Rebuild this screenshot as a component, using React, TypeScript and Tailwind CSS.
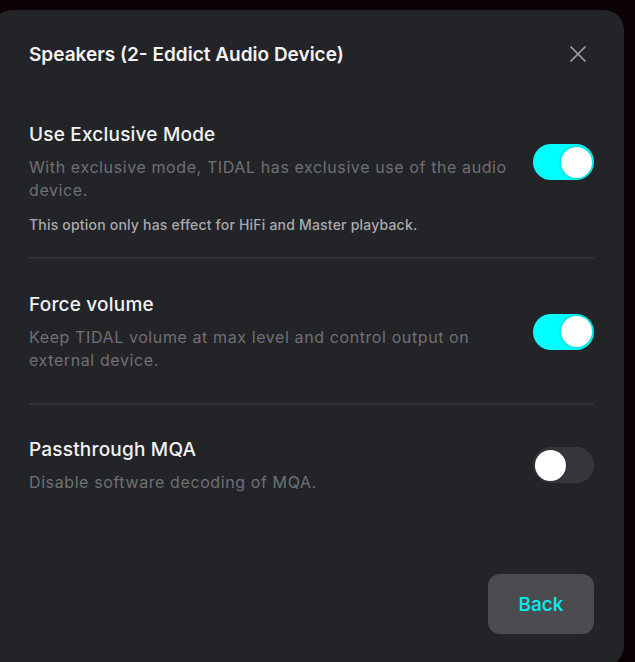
import React, { useState } from "react";

type Option = {
  id: string;
  title: string;
  description: string;
  note?: string;
  enabled: boolean;
};

const initialOptions: Option[] = [
  {
    id: "exclusive",
    title: "Use Exclusive Mode",
    description: "With exclusive mode, TIDAL has exclusive use of the audio device.",
    note: "This option only has effect for HiFi and Master playback.",
    enabled: true,
  },
  {
    id: "force",
    title: "Force volume",
    description: "Keep TIDAL volume at max level and control output on external device.",
    enabled: true,
  },
  {
    id: "mqa",
    title: "Passthrough MQA",
    description: "Disable software decoding of MQA.",
    enabled: false,
  },
];

function Toggle({ on, onChange }: { on: boolean; onChange: () => void }) {
  return (
    <button
      type="button"
      role="switch"
      aria-checked={on}
      onClick={onChange}
      className={
        "relative flex h-[36px] w-[61px] shrink-0 items-center rounded-full px-[2px] " +
        (on ? "justify-end bg-[#00ffff]" : "justify-start bg-[#36373b]")
      }
    >
      <span className="block h-[31px] w-[31px] rounded-full bg-white shadow-[0_0_3px_rgba(0,0,0,0.35)]" />
    </button>
  );
}

export default function App() {
  const [options, setOptions] = useState(initialOptions);
  const flip = (id: string) =>
    setOptions((prev) => prev.map((o) => (o.id === id ? { ...o, enabled: !o.enabled } : o)));

  return (
    <div
      className="h-[662px] w-[635px] overflow-hidden bg-[#0c0103] pt-[10px]"
      style={{ fontFamily: "Inter, 'Noto Sans', sans-serif" }}
    >
      <div className="ml-[-8px] flex h-[656px] w-[632px] flex-col rounded-[20px] bg-[#232428] pb-[32px] pl-[37px] pr-[30px] pt-[30px]">
        <div className="flex h-[28px] items-center justify-between">
          <h2 className="mt-[2px] text-[19px] font-semibold leading-[28px] text-[#f2f2f2]">
            Speakers (2- Eddict Audio Device)
          </h2>
          <button type="button" aria-label="Close" className="mr-[7px] flex h-[18px] w-[18px] items-center justify-center">
            <svg width="18" height="18" viewBox="0 0 18 18" fill="none">
              <path d="M1.5 1.5 L16.5 16.5 M16.5 1.5 L1.5 16.5" stroke="#a3a4a8" strokeWidth="1.6" />
            </svg>
          </button>
        </div>

        <div className="mt-[53px] flex flex-col">
          {options.map((o, i) => (
            <div key={o.id}>
              {i > 0 && <div className="h-[2px] bg-[#313236]" />}
              <div
                className={
                  "flex items-start justify-between " +
                  (i === 0 ? "pb-[23px]" : i === 1 ? "pb-[31px] pt-[32px]" : "pt-[31px]")
                }
              >
                <div className="flex w-[490px] flex-col">
                  <h3 className="text-[19px] font-medium leading-[28px] tracking-[0.2px] text-[#f2f2f2]">{o.title}</h3>
                  <p className="mt-[7px] text-[16px] leading-[23px] tracking-[0.6px] text-[#6f7074]">{o.description}</p>
                  {o.note && (
                    <p className="mt-[14px] text-[14px] font-medium leading-[18px] tracking-[0.2px] text-[#a9aaae]">{o.note}</p>
                  )}
                </div>
                <div className={o.note ? "mt-[23px]" : "self-center"}>
                  <Toggle on={o.enabled} onChange={() => flip(o.id)} />
                </div>
              </div>
            </div>
          ))}
        </div>

        <div className="mt-auto flex justify-end">
          <button
            type="button"
            className="h-[60px] w-[106px] rounded-[12px] bg-[#4a4c50] pt-[3px] text-[19px] font-medium text-[#00f0f0]"
          >
            Back
          </button>
        </div>
      </div>
    </div>
  );
}
